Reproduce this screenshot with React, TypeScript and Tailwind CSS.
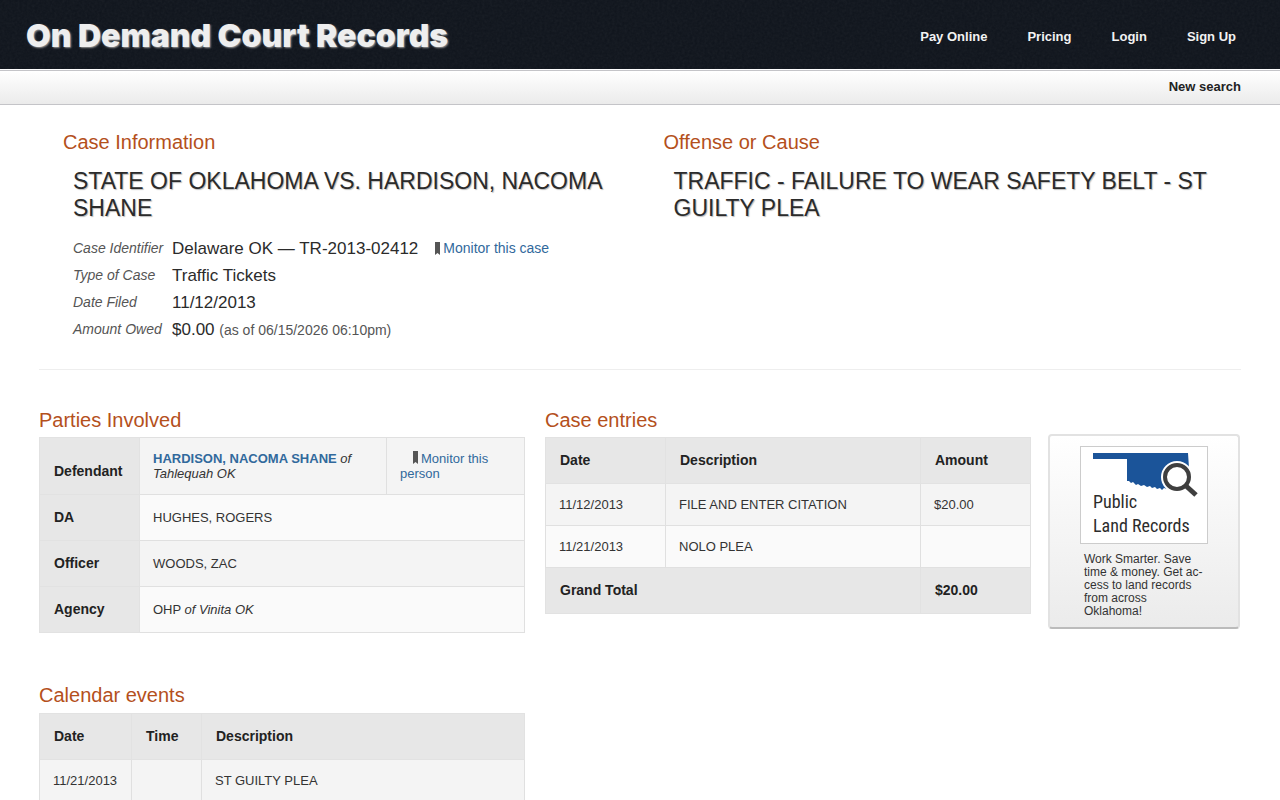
import type { ReactNode } from "react";

const navLinks = ["Pay Online", "Pricing", "Login", "Sign Up"];

const parties = [
  { role: "DA", name: "HUGHES, ROGERS", place: "" },
  { role: "Officer", name: "WOODS, ZAC", place: "" },
  { role: "Agency", name: "OHP", place: "of Vinita OK" },
];

const entries = [
  { date: "11/12/2013", description: "FILE AND ENTER CITATION", amount: "$20.00" },
  { date: "11/21/2013", description: "NOLO PLEA", amount: "" },
];

const events = [{ date: "11/21/2013", time: "", description: "ST GUILTY PLEA" }];

const th = "border border-[#e2e2e2] bg-[#e7e7e7] px-[14px] pt-[15px] pb-[15px] text-left align-bottom text-[14px] leading-[15px] font-bold text-[#222]";
const td = "border border-[#e0e0e0] px-[13px] py-[13px] align-middle text-[13px] leading-[15px]";
const row = "odd:bg-[#f4f4f4] even:bg-[#fafafa]";

function Bookmark({ className }: { className: string }) {
  return (
    <svg viewBox="0 0 5 13" className={className} aria-hidden="true">
      <path d="M0 0h5v13L2.500 11 0 13z" fill="#555" />
    </svg>
  );
}

function SectionTitle({ children }: { children: ReactNode }) {
  return <h2 className="text-[20px] leading-[24px] text-[#b4501c]">{children}</h2>;
}

function Header() {
  return (
    <header className="relative bg-[#0f141c]">
      <svg className="absolute inset-0 h-full w-full opacity-[0.06]" aria-hidden="true">
        <filter id="grain">
          <feTurbulence type="fractalNoise" baseFrequency="0.4" numOctaves="2" seed="4" />
          <feColorMatrix type="saturate" values="0" />
        </filter>
        <rect width="100%" height="100%" filter="url(#grain)" />
      </svg>
      <div className="relative flex h-[69px] items-center justify-between pr-[44px] pl-[26px]">
        <a
          href="#"
          className="pt-[2px] font-[Inter,sans-serif] text-[32px] leading-[40px] font-black text-[#eee] [text-shadow:1px_1px_2px_#999]"
        >
          On Demand Court Records
        </a>
        <nav className="flex gap-10 pt-1 text-[13px] leading-[20px] font-bold text-[#f2f2f2]">
          {navLinks.map((label) => <a key={label} href="#">{label}</a>)}
        </nav>
      </div>
    </header>
  );
}

function CaseInfo() {
  return (
    <section className="grid grid-cols-[600fr_577fr] border-b border-[#eee] pt-[25px] pb-[25px] pl-[24px]">
      <div>
        <SectionTitle>Case Information</SectionTitle>
        <div className="pl-[10px]">
          <h1 className="pt-[14px] text-[23px] leading-[27px] text-[#2b2b2b] [text-shadow:1px_1px_1px_#bbb]">
            STATE OF OKLAHOMA VS. HARDISON, NACOMA SHANE
          </h1>
          <dl className="grid grid-cols-[99px_1fr] pt-[13px] text-[17px] leading-[27px] text-[#2b2b2b] [&>dt]:text-[14px] [&>dt]:text-[#555] [&>dt]:italic">
            <dt>Case Identifier</dt>
            <dd className="flex items-center">
              Delaware OK — TR-2013-02412
              <Bookmark className="ml-[17px] h-[13px] w-[5px]" />
              <a href="#" className="ml-[3px] text-[14px] text-[#31699c]">Monitor this case</a>
            </dd>
            <dt>Type of Case</dt>
            <dd>Traffic Tickets</dd>
            <dt>Date Filed</dt>
            <dd>11/12/2013</dd>
            <dt>Amount Owed</dt>
            <dd>$0.00 <span className="text-[14px] text-[#555]">(as of 06/15/2026 06:10pm)</span></dd>
          </dl>
        </div>
      </div>
      <div>
        <SectionTitle>Offense or Cause</SectionTitle>
        <p className="pt-[14px] pl-[10px] text-[23px] leading-[27px] text-[#2b2b2b] [text-shadow:1px_1px_1px_#bbb]">
          TRAFFIC - FAILURE TO WEAR SAFETY BELT - ST GUILTY PLEA
        </p>
      </div>
    </section>
  );
}

function PartiesTable() {
  return (
    <table className="mt-[5px] w-full table-fixed border-collapse">
      <colgroup>
        <col className="w-[100px]" />
        <col />
        <col className="w-[138px]" />
      </colgroup>
      <tbody>
        <tr className={row}>
          <th scope="row" className={th}>Defendant</th>
          <td className={td}>
            <a href="#" className="font-bold text-[#31699c]">HARDISON, NACOMA SHANE</a> <i>of Tahlequah OK</i>
          </td>
          <td className={td}>
            <Bookmark className="mr-[3px] ml-[13px] inline h-[13px] w-[5px] align-[-1px]" />
            <a href="#" className="text-[#31699c]">Monitor this person</a>
          </td>
        </tr>
        {parties.map((p) => (
          <tr key={p.role} className={row}>
            <th scope="row" className={th}>{p.role}</th>
            <td colSpan={2} className={td}>{p.name} <i>{p.place}</i></td>
          </tr>
        ))}
      </tbody>
    </table>
  );
}

function EntriesTable() {
  return (
    <table className="mt-[5px] w-full table-fixed border-collapse">
      <thead>
        <tr>
          <th className={`w-[120px] ${th}`}>Date</th>
          <th className={th}>Description</th>
          <th className={`w-[110px] ${th}`}>Amount</th>
        </tr>
      </thead>
      <tbody>
        {entries.map((e) => (
          <tr key={e.date} className={row}>
            <td className={td}>{e.date}</td>
            <td className={td}>{e.description}</td>
            <td className={td}>{e.amount}</td>
          </tr>
        ))}
      </tbody>
      <tfoot>
        <tr>
          <th colSpan={2} className={th}>Grand Total</th>
          <th className={th}>$20.00</th>
        </tr>
      </tfoot>
    </table>
  );
}

function EventsTable() {
  return (
    <table className="mt-[6px] w-full table-fixed border-collapse">
      <thead>
        <tr>
          <th className={`w-[92px] ${th}`}>Date</th>
          <th className={`w-[70px] ${th}`}>Time</th>
          <th className={th}>Description</th>
        </tr>
      </thead>
      <tbody>
        {events.map((e) => (
          <tr key={e.date} className={row}>
            <td className={td}>{e.date}</td>
            <td className={td}>{e.time}</td>
            <td className={td}>{e.description}</td>
          </tr>
        ))}
      </tbody>
    </table>
  );
}

function LandRecordsAd() {
  return (
    <a
      href="#"
      className="mt-[26px] mr-px block w-[192px] shrink-0 rounded border-2 border-[#e2e2e2] border-b-[#bbb] bg-linear-to-b from-white to-[#ebebeb] px-[30px] pt-[10px] pb-[9px]"
    >
      <svg viewBox="0 0 126 96" className="block w-full border border-[#ccc] bg-white" role="img" aria-label="Public Land Records">
        <path
          d="M12 6H107L108 21V30L86 42 83 41 81 43 79 41 76 42 74 40 71 41 69 39 66 40 63 38 60 39 57 37 55 38 52 35 50 36 48 34 46 34V12H12z"
          fill="#1b5499"
        />
        <circle cx="96" cy="30" r="16" fill="#fff" />
        <path d="M104 37l11 10" stroke="#fff" strokeWidth="9" />
        <circle cx="96" cy="30" r="12" fill="#fff" stroke="#3f3f3f" strokeWidth="4" />
        <path d="M104 38l11 10" stroke="#3f3f3f" strokeWidth="5" />
        <g fill="#2c2c2c" fontFamily="'Roboto Condensed', 'Open Sans Condensed', sans-serif" fontSize="18">
          <text x="12" y="61">Public</text>
          <text x="12" y="85">Land Records</text>
        </g>
      </svg>
      <p className="pt-[9px] pl-[4px] text-[12px] leading-[13px] text-[#333]">
        Work Smarter. Save time &amp; money. Get ac&shy;cess to land records from across Oklahoma!
      </p>
    </a>
  );
}

export default function App() {
  return (
    <div className="h-screen overflow-hidden bg-white font-['Liberation_Sans',Arial,sans-serif] text-[#333]">
      <Header />
      <div className="mt-px flex justify-end border-y border-[#c4c4c8] bg-linear-to-b from-white to-[#ebebeb] pt-[6px] pr-[39px] pb-[7px]">
        <a href="#" className="text-[13px] leading-[20px] font-bold text-[#222]">New search</a>
      </div>
      <main className="px-[39px]">
        <CaseInfo />
        <div className="flex items-start pt-[38px]">
          <div className="mr-[20px] min-w-0 flex-1">
            <SectionTitle>Parties Involved</SectionTitle>
            <PartiesTable />
            <div className="pt-[50px]">
              <SectionTitle>Calendar events</SectionTitle>
              <EventsTable />
            </div>
          </div>
          <div className="mr-[17px] min-w-0 flex-1">
            <SectionTitle>Case entries</SectionTitle>
            <EntriesTable />
          </div>
          <LandRecordsAd />
        </div>
      </main>
    </div>
  );
}
